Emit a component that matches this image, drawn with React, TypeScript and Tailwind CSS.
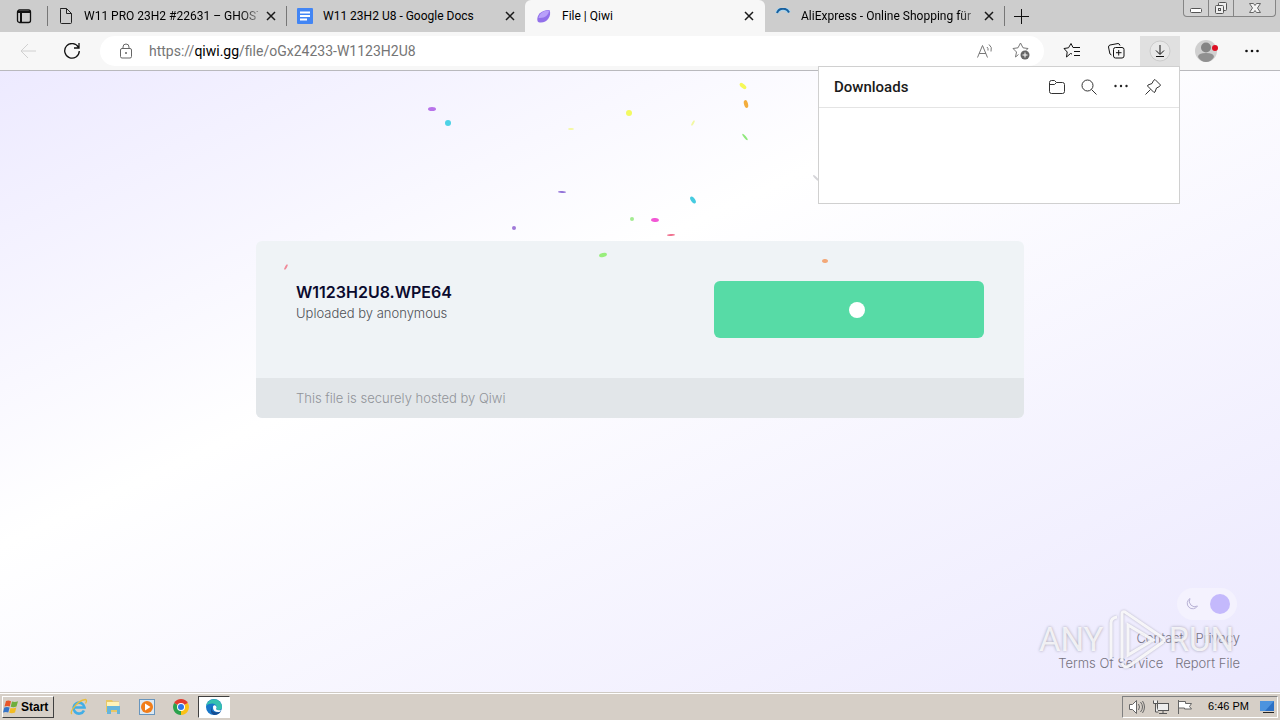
import type { ReactNode } from "react";

type Tab = {
  title: string;
  icon: ReactNode;
  active?: boolean;
  faded?: boolean;
};

type Piece = {
  x: number;
  y: number;
  rx: number;
  ry: number;
  rotate: number;
  color: string;
};

const confetti: Piece[] = [
  { x: 432, y: 109, rx: 4, ry: 2, rotate: 0, color: "#b873ea" },
  { x: 448, y: 123, rx: 3, ry: 3, rotate: 0, color: "#4dd2e6" },
  { x: 571, y: 129, rx: 3, ry: 1, rotate: 0, color: "#f4f8a0" },
  { x: 629, y: 113, rx: 3, ry: 3, rotate: 0, color: "#f3fa62" },
  { x: 693, y: 123, rx: 3, ry: 1, rotate: -60, color: "#f2f8a4" },
  { x: 743, y: 86, rx: 4, ry: 2, rotate: 40, color: "#f6f958" },
  { x: 746, y: 104, rx: 4, ry: 2, rotate: 75, color: "#f3ad3d" },
  { x: 745, y: 137, rx: 4, ry: 1, rotate: 50, color: "#8fe87c" },
  { x: 562, y: 192, rx: 4, ry: 1, rotate: 3, color: "#9272d8" },
  { x: 514, y: 228, rx: 2, ry: 2, rotate: 0, color: "#a079d8" },
  { x: 693, y: 200, rx: 4, ry: 2, rotate: 55, color: "#45cbe0" },
  { x: 632, y: 219, rx: 2, ry: 2, rotate: 0, color: "#a3eb92" },
  { x: 655, y: 220, rx: 4, ry: 2, rotate: 5, color: "#f257d5" },
  { x: 671, y: 235, rx: 4, ry: 1, rotate: -4, color: "#f0718f" },
  { x: 603, y: 255, rx: 4, ry: 2, rotate: -15, color: "#98ee7c" },
  { x: 825, y: 261, rx: 3, ry: 2, rotate: 5, color: "#f3a878" },
  { x: 286, y: 267, rx: 3, ry: 1, rotate: -60, color: "#f08a99" },
  { x: 816, y: 178, rx: 4, ry: 1, rotate: 45, color: "#d4d4d8" }
];

const tabs: Tab[] = [
  { title: "W11 PRO 23H2 #22631 – GHOST", icon: <PageIcon />, faded: true },
  { title: "W11 23H2 U8 - Google Docs", icon: <DocsIcon /> },
  { title: "File | Qiwi", icon: <QiwiIcon />, active: true },
  { title: "AliExpress - Online Shopping für", icon: <SpinnerIcon />, faded: true }
];

function PageIcon() {
  return (
    <svg viewBox="0 0 16 16" className="size-4 shrink-0" fill="none" stroke="#222" aria-hidden>
      <path d="M2.500.5h6l5 5v9q0 1-1 1h-9q-1 0-1-1v-13q0-1 1-1zM8.500.5v5h5" />
    </svg>
  );
}

function DocsIcon() {
  return (
    <svg viewBox="0 0 16 16" className="size-4 shrink-0" aria-hidden>
      <rect width="16" height="16" rx="1" fill="#4285f4" />
      <path d="M3 4.500h10M3 8h10M3 11.500h7" stroke="#fff" strokeWidth="2" />
    </svg>
  );
}

function QiwiIcon() {
  return (
    <svg viewBox="0 0 16 16" className="size-4 shrink-0" aria-hidden>
      <path d="M1.500 13C0 7 6 1.500 13.500 2 16 8 11 14.500 5 14.500 3 14.500 2 14 1.500 13z" fill="#9270ea" />
      <path d="M2.500 10C3 6 7 2.500 13 2.500c0 4-4 8-10.500 7.500z" fill="#b9a0fa" />
    </svg>
  );
}

function SpinnerIcon() {
  return (
    <svg viewBox="0 0 16 16" className="size-4 shrink-0" fill="none" aria-hidden>
      <path d="M2 5A6.500 6.500 0 0 1 14 4.500" stroke="#a9d4ee" strokeWidth="4" />
      <path d="M2 5A6.500 6.500 0 0 1 14 4.500" stroke="#175f9e" strokeWidth="2" />
    </svg>
  );
}

function CloseIcon() {
  return (
    <svg viewBox="0 0 10 10" className="size-[10px]" fill="none" stroke="#1a1a1a" strokeWidth="1.500" aria-hidden>
      <path d="M1 1l8 8M9 1L1 9" />
    </svg>
  );
}

function TabStrip() {
  return (
    <div className="flex h-8 items-stretch bg-[#cdcdcd]">
      <button type="button" aria-label="Tab actions" className="flex w-[47px] shrink-0 items-center justify-center">
        <svg viewBox="0 0 16 16" className="size-4" fill="none" stroke="#111" strokeWidth="1.300" aria-hidden>
          <rect x="1.500" y="2" width="13" height="12.500" rx="2" />
          <path d="M1.500 4h13M5 4v10.500" strokeWidth="2" />
        </svg>
      </button>
      <div className="flex min-w-0 flex-1">
        {tabs.map((tab, index) => (
          <div
            key={tab.title}
            className={
              tab.active
                ? "flex w-[240px] min-w-0 items-center rounded-t-md bg-[#f7f7f7] pr-[11px] pl-[11px]"
                : "flex w-[239px] min-w-0 items-center pr-[10px]"
            }
          >
            {!tab.active && (
              <span className={index === 3 ? "mr-[10px] h-5" : "mr-[10px] h-5 border-l border-[#777]"} />
            )}
            {tab.icon}
            <button
              type="button"
              className={
                tab.faded
                  ? "ml-[10px] min-w-0 flex-1 bg-linear-to-r from-black from-90% to-black/30 bg-clip-text text-left text-[12px] whitespace-nowrap text-transparent"
                  : "ml-[10px] min-w-0 flex-1 overflow-hidden text-left text-[12px] whitespace-nowrap text-black"
              }
            >
              {tab.title}
            </button>
            <button type="button" aria-label={`Close ${tab.title}`} className="ml-2 shrink-0">
              <CloseIcon />
            </button>
          </div>
        ))}
        <div className="flex items-center">
          <span className="h-5 border-l border-[#777]" />
          <button type="button" aria-label="New tab" className="ml-[9px]">
            <svg viewBox="0 0 15 15" className="size-[15px]" stroke="#111" aria-hidden>
              <path d="M7.500 0v15M0 7.500h15" />
            </svg>
          </button>
        </div>
      </div>
      <div className="mr-1 flex h-[17px] w-[93px] shrink-0 rounded-b-sm border border-t-0 border-[#858585] bg-[#d2d2d2]">
        <button type="button" aria-label="Minimize" className="flex w-[25px] items-center justify-center border-r border-[#858585]">
          <svg viewBox="0 0 14 14" className="size-[14px]" fill="#fff" stroke="#555" aria-hidden>
            <rect x="1.500" y="7.500" width="11" height="4" rx="1" />
          </svg>
        </button>
        <button type="button" aria-label="Restore" className="flex w-[25px] items-center justify-center border-r border-[#858585]">
          <svg viewBox="0 0 14 14" className="size-[14px]" fill="#eee" stroke="#555" aria-hidden>
            <rect x="4.500" y="1.500" width="8" height="8" rx="1" />
            <rect x="1.500" y="4.500" width="8" height="8" rx="1" />
            <rect x="4.500" y="7.500" width="2" height="2" />
          </svg>
        </button>
        <button type="button" aria-label="Close" className="flex flex-1 items-center justify-center">
          <svg viewBox="0 0 14 14" className="size-[14px]" fill="#f4f4f4" stroke="#666" aria-hidden>
            <path d="M1.500 2.500h4L7 4.500l1.500-2h4L9.500 7l3 4.500h-4L7 9.500l-1.500 2h-4l3-4.500z" />
          </svg>
        </button>
      </div>
    </div>
  );
}

function Toolbar() {
  return (
    <div className="flex h-[39px] items-center border-b border-[#b9b9bd] bg-[#f7f7f7]">
      <button type="button" aria-label="Back" disabled className="ml-5 shrink-0">
        <svg viewBox="0 0 16 16" className="size-4" fill="none" stroke="#d0d0d0" aria-hidden>
          <path d="M16 8H1M8 1L1 8l7 7" />
        </svg>
      </button>
      <button type="button" aria-label="Refresh" className="ml-7 shrink-0">
        <svg viewBox="0 0 16 16" className="size-4" fill="none" stroke="#111" strokeWidth="1.300" aria-hidden>
          <path d="M14.500 4.500A7.300 7.300 0 1 0 15.300 8M15 0v5h-5" />
        </svg>
      </button>
      <div className="ml-5 flex h-[30px] min-w-0 flex-1 items-center rounded-full bg-white pr-[14px] pl-5">
        <svg viewBox="0 0 12 16" className="h-4 w-3 shrink-0" fill="none" stroke="#666" aria-hidden>
          <rect x=".5" y="5.500" width="11" height="9.500" rx="1.500" />
          <path d="M3 5.500V4a3 3 0 0 1 6 0v1.500" />
          <circle cx="6" cy="10" r="1" fill="#666" stroke="none" />
        </svg>
        <div className="ml-[17px] min-w-0 flex-1 truncate text-[14px] text-[#757575]">
          https://<span className="text-black">qiwi.gg</span>/file/oGx24233-W1123H2U8
        </div>
        <button type="button" aria-label="Read aloud" className="shrink-0">
          <svg viewBox="0 0 18 18" className="size-[18px]" fill="none" stroke="#777" aria-hidden>
            <path d="M1.500 15.500L6.500 3.500l5 12M3 11.500h7M11 5q1.500 1.500 1 3.500M13 2.500q3.500 2.500 2 7" />
          </svg>
        </button>
        <button type="button" aria-label="Add to favorites" className="ml-[18px] shrink-0">
          <svg viewBox="0 0 18 18" className="size-[18px]" fill="none" stroke="#777" aria-hidden>
            <path d="M6.500 12.500L3.500 15l1-5L1 6.500l5-.7L8.500 1 11 5.800l5 .7-2 2" />
            <circle cx="13" cy="13" r="4.500" fill="#666" stroke="none" />
            <path d="M13 10.500v5M10.500 13h5" stroke="#fff" />
          </svg>
        </button>
      </div>
      <button type="button" aria-label="Favorites" className="ml-[19px] shrink-0">
        <svg viewBox="0 0 18 18" className="size-[18px]" fill="none" stroke="#111" aria-hidden>
          <path d="M9 12L7.500 11.500 3.500 15l.7-5L1 6.500l4.500-.7L8 1.500l2 4h7M11 9.500h6M11 13.500h6" />
        </svg>
      </button>
      <button type="button" aria-label="Collections" className="ml-[26px] shrink-0">
        <svg viewBox="0 0 18 18" className="size-[18px]" fill="none" stroke="#111" aria-hidden>
          <path d="M4.500 13Q2.500 12.500 2.500 10L1.500 5q0-1.500 1.500-2l8-1.500q1.500 0 2 2" />
          <rect x="6.500" y="5.500" width="10.500" height="10.500" rx="2" />
          <path d="M11.700 8v5.500M9 10.700h5.500" />
        </svg>
      </button>
      <button type="button" aria-label="Downloads" className="ml-[15px] flex h-[30px] w-10 shrink-0 items-center justify-center bg-[#e0e0e0]">
        <svg viewBox="0 0 22 22" className="size-[22px]" fill="none" stroke="#111" aria-hidden>
          <circle cx="11" cy="11" r="10" fill="#e8e8e8" stroke="#ccc" />
          <path d="M11 5v9M7 10.500l4 4 4-4M7 16.500h8" />
        </svg>
      </button>
      <button type="button" aria-label="Profile" className="ml-[15px] shrink-0">
        <svg viewBox="0 0 24 24" className="size-6" aria-hidden>
          <circle cx="11" cy="12" r="11" fill="#d0d0d0" />
          <circle cx="11" cy="8.500" r="5" fill="#858585" />
          <path d="M3 18q0-4 8-4t8 4q-3 5-8 5t-8-5z" fill="#909090" />
          <circle cx="20" cy="9" r="3" fill="#dd1024" />
        </svg>
      </button>
      <button type="button" aria-label="Settings and more" className="mr-[19px] ml-6 shrink-0">
        <svg viewBox="0 0 18 18" className="size-[18px]" fill="#111" aria-hidden>
          <circle cx="3.500" cy="9" r="1.300" />
          <circle cx="9" cy="9" r="1.300" />
          <circle cx="14.500" cy="9" r="1.300" />
        </svg>
      </button>
    </div>
  );
}

function DownloadsPanel() {
  return (
    <section className="absolute top-[66px] right-[100px] h-[138px] w-[362px] border border-[#d0d0d0] bg-white">
      <header className="flex h-[41px] items-center border-b border-[#e4e4e4] pr-[17px] pl-[15px]">
        <h2 className="flex-1 text-[15px] leading-5 font-medium text-[#1a1a1a]">Downloads</h2>
        <div className="flex gap-[14px]">
          <button type="button" aria-label="Open downloads folder">
            <svg viewBox="0 0 18 18" className="size-[18px]" fill="none" stroke="#333" aria-hidden>
              <path d="M1.500 4.500q0-2 2-2h3l2 2h6q2 0 2 2v7q0 2-2 2h-11q-2 0-2-2zM1.500 6.500h5l2-2" />
            </svg>
          </button>
          <button type="button" aria-label="Search downloads">
            <svg viewBox="0 0 18 18" className="size-[18px]" fill="none" stroke="#333" aria-hidden>
              <circle cx="7.500" cy="7.500" r="5.500" />
              <path d="M11.500 11.500l5 5" />
            </svg>
          </button>
          <button type="button" aria-label="More options">
            <svg viewBox="0 0 18 18" className="size-[18px]" fill="#222" aria-hidden>
              <circle cx="3.500" cy="8" r="1.200" />
              <circle cx="9" cy="8" r="1.200" />
              <circle cx="14.500" cy="8" r="1.200" />
            </svg>
          </button>
          <button type="button" aria-label="Pin downloads">
            <svg viewBox="0 0 18 18" className="size-[18px]" fill="none" stroke="#333" aria-hidden>
              <path d="M11 1.500L16.500 7l-1 1.500-3 1.500-1.500 4-1 .5L3.500 8l.5-1 4-1.500 1.500-3zM6.500 11.500l-5 5" />
            </svg>
          </button>
        </div>
      </header>
    </section>
  );
}

function FileCard() {
  return (
    <section className="mx-auto mt-[170px] w-full max-w-3xl overflow-hidden rounded-md bg-[#eff3f6]">
      <div className="flex items-start justify-between p-10">
        <div>
          <h1 className="text-[16px] leading-[22px] font-semibold text-[#0a0a2e]">W1123H2U8.WPE64</h1>
          <p className="text-[13px] leading-5 font-light text-[#4e5156]">Uploaded by anonymous</p>
        </div>
        <button
          type="button"
          aria-label="Download"
          className="flex h-[57px] w-[270px] items-center justify-center rounded-md bg-[#57dba6]"
        >
          <span className="ml-4 size-4 rounded-full bg-white" />
        </button>
      </div>
      <p className="bg-[#e2e6e9] px-10 text-[13px] leading-10 font-light text-[#919499]">This file is securely hosted by Qiwi</p>
    </section>
  );
}

function Watermark() {
  return (
    <div className="pointer-events-none absolute right-[46px] bottom-[49px] flex h-[62px] w-[195px] items-center justify-between text-[33px] text-white/80 [text-shadow:0_0_3px_#a09eae]">
      <span>ANY</span>
      <svg viewBox="0 0 60 62" className="h-[62px] w-[60px] drop-shadow-[0_0_1px_#aaa8b8]" fill="none" stroke="#fff" strokeOpacity=".85" strokeWidth="3" aria-hidden>
        <path d="M5 50V14q0-5 6-6M16 52V5q0-3 3-2l38 26q2 2 0 4L23 57q-5 3-7-3M22 46V16l25 15z" />
      </svg>
      <span>RUN</span>
    </div>
  );
}

function PageFooter() {
  return (
    <footer className="mt-auto mr-10 mb-4 flex flex-col items-end text-[13px] leading-[25px] font-light text-[#76737f]">
      <button type="button" aria-label="Toggle theme" className="mr-[3px] mb-[6px] flex h-8 w-[60px] items-center justify-between rounded-full bg-[#f4f2fe] pr-[7px] pl-2">
        <svg viewBox="0 0 14 14" className="size-[14px]" fill="none" stroke="#b9b3d6" aria-hidden>
          <path d="M5 1.500A5.500 5.500 0 1 0 12.500 9 5.500 5.500 0 0 1 5 1.500z" />
        </svg>
        <span className="size-5 rounded-full bg-[#c4b9fc]" />
      </button>
      <nav className="flex flex-col items-end">
        <div className="flex gap-3">
          <a href="#contact">Contact</a>
          <a href="#privacy">Privacy</a>
        </div>
        <div className="flex gap-3">
          <a href="#terms">Terms Of Service</a>
          <a href="#report">Report File</a>
        </div>
      </nav>
    </footer>
  );
}

function Taskbar() {
  return (
    <div className="flex h-7 items-center border-t border-[#cfcac4] bg-[#d6cfc7] font-['Liberation_Sans',sans-serif] text-[12px] shadow-[inset_0_1px_0_#fff]">
      <button
        type="button"
        className="ml-[2px] flex h-[22px] w-[52px] items-center gap-[2px] border border-t-white border-r-[#404040] border-b-[#404040] border-l-white text-[12px] font-bold text-black"
      >
        <svg viewBox="0 0 16 16" className="size-4 shrink-0" aria-hidden>
          <path d="M3 2q2.500-1 5 .3L6.800 7.500Q4.500 6.500 1.500 7.500z" fill="#e8562a" />
          <path d="M9 2.600q3 1 6-.3L13.500 7.500q-3 1.300-5.800.3z" fill="#6fae3c" />
          <path d="M1.300 8.500q3-1 5.300.1L5.300 13.500Q3 12.500 0 13.500z" fill="#3574c8" />
          <path d="M7.500 8.900q3 1 5.800-.3L12 13.500q-3 1.300-5.800.3z" fill="#f3bc23" />
        </svg>
        Start
      </button>
      <div className="ml-2 flex items-center">
        <button type="button" aria-label="Internet Explorer" className="flex w-[34px] justify-center">
          <svg viewBox="0 0 18 18" className="size-[18px]" fill="none" aria-hidden>
            <path d="M14 12.500A5.500 5.500 0 1 1 14.500 9.500H5" stroke="#42aee6" strokeWidth="2.600" />
            <path d="M2 16Q0 15 3 10.500 9 2 15.500 1.500q2 .5 0 4" stroke="#e9bd3c" strokeWidth="1.300" />
          </svg>
        </button>
        <button type="button" aria-label="File Explorer" className="flex w-[34px] justify-center">
          <svg viewBox="0 0 18 18" className="size-[18px]" aria-hidden>
            <path d="M2 2h6l1 1.500h6V14H2z" fill="#e8c765" />
            <path d="M3 4h12v5H3z" fill="#fff3b8" />
            <path d="M3 8h13v8h-3v-4H7v4H3z" fill="#66b5dc" />
          </svg>
        </button>
        <button type="button" aria-label="Media Player" className="flex w-[34px] justify-center">
          <svg viewBox="0 0 18 18" className="size-[18px]" aria-hidden>
            <rect x="1.500" y="1.500" width="15" height="15" fill="#dce9f3" stroke="#6895bd" />
            <circle cx="9" cy="9" r="6" fill="#f17d19" />
            <path d="M7 5.500l5.500 3.500L7 12.500z" fill="#fff" />
          </svg>
        </button>
        <button type="button" aria-label="Chrome" className="flex w-[34px] justify-center">
          <svg viewBox="0 0 18 18" className="size-[18px]" aria-hidden>
            <path d="M9 9L2.100 5a8 8 0 0 1 13.800 0z" fill="#e33b2e" />
            <path d="M9 9l6.900-4A8 8 0 0 1 9 17z" fill="#fbc116" />
            <path d="M9 9v8A8 8 0 0 1 2.100 5z" fill="#2ba24c" />
            <circle cx="9" cy="9" r="4" fill="#fff" />
            <circle cx="9" cy="9" r="3" fill="#2e76e8" />
          </svg>
        </button>
        <button type="button" aria-label="Edge" className="flex h-[22px] w-8 items-center justify-center border border-t-[#404040] border-r-white border-b-white border-l-[#404040] bg-white">
          <svg viewBox="0 0 18 18" className="size-[18px]" aria-hidden>
            <circle cx="9" cy="9" r="8" fill="#1877c9" />
            <path d="M1.200 7.500A8 8 0 0 1 17 9q0 3-3.500 3-3 0-2-2 .5-4-4-4.500-4 0-6.300 2z" fill="#35c1b0" />
            <path d="M7 8q-2 6 5 6.500 2 0 4-1.300A8 8 0 0 1 9 17Q4 15 7 8z" fill="#154c91" />
            <path d="M8 8.500q1.500-2.500 3.300 0 .7 1-.3 2.500 1 2 5 1L14.500 14Q7.500 14.500 8 8.500z" fill="#fff" />
          </svg>
        </button>
      </div>
      <div className="mr-[2px] ml-auto flex h-[22px] w-[156px] items-center border border-t-[#808080] border-r-white border-b-white border-l-[#808080] pr-[2px] pl-[5px]">
        <svg viewBox="0 0 18 16" className="h-4 w-[18px]" fill="#fff" stroke="#666" aria-hidden>
          <path d="M1.500 5.500h3l4-4v13l-4-4h-3z" />
          <path d="M10.500 5q2 3 0 6M12.500 3q4 5 0 10M14.500 2q4 6 0 12" fill="none" />
        </svg>
        <svg viewBox="0 0 18 16" className="ml-[6px] h-4 w-[18px]" fill="#eee" stroke="#555" aria-hidden>
          <rect x="5.500" y="4.500" width="11" height="7" />
          <path d="M7 14.500h8M11 12v2M1.500 1.500v3h4v-3M3.500 5v8h3" />
        </svg>
        <svg viewBox="0 0 18 16" className="ml-[6px] h-4 w-[18px]" fill="#fff" stroke="#666" aria-hidden>
          <path d="M2.500 1v14M2.500 2.500h7v2h6l-2 3 2 2.500h-7v-1h-6z" />
        </svg>
        <time className="ml-auto text-[11px] text-black">6:46 PM</time>
        <svg viewBox="0 0 16 16" className="ml-[10px] size-4" aria-hidden>
          <path d="M1 2h14v10H1z" fill="#2b70c5" />
          <path d="M1 2h14L6 12H1z" fill="#4c93de" />
          <path d="M4 13h11v1H4z" fill="#222" />
        </svg>
      </div>
    </div>
  );
}

export default function App() {
  return (
    <div className="relative flex min-h-screen flex-col font-['Roboto','Noto_Sans',sans-serif]">
      <TabStrip />
      <Toolbar />
      <main className="flex flex-1 flex-col bg-[linear-gradient(155deg,#edeaff_0%,#ffffff_39%,#ebe8fe_100%)] font-['Inter',sans-serif]">
        <FileCard />
        <PageFooter />
      </main>
      <Taskbar />
      <svg viewBox="0 0 1280 720" className="pointer-events-none absolute inset-x-0 top-0 w-full" aria-hidden>
        {confetti.map((piece) => (
          <ellipse
            key={`${piece.x}-${piece.y}`}
            cx={piece.x}
            cy={piece.y}
            rx={piece.rx}
            ry={piece.ry}
            fill={piece.color}
            transform={`rotate(${piece.rotate} ${piece.x} ${piece.y})`}
          />
        ))}
      </svg>
      <Watermark />
      <DownloadsPanel />
    </div>
  );
}
